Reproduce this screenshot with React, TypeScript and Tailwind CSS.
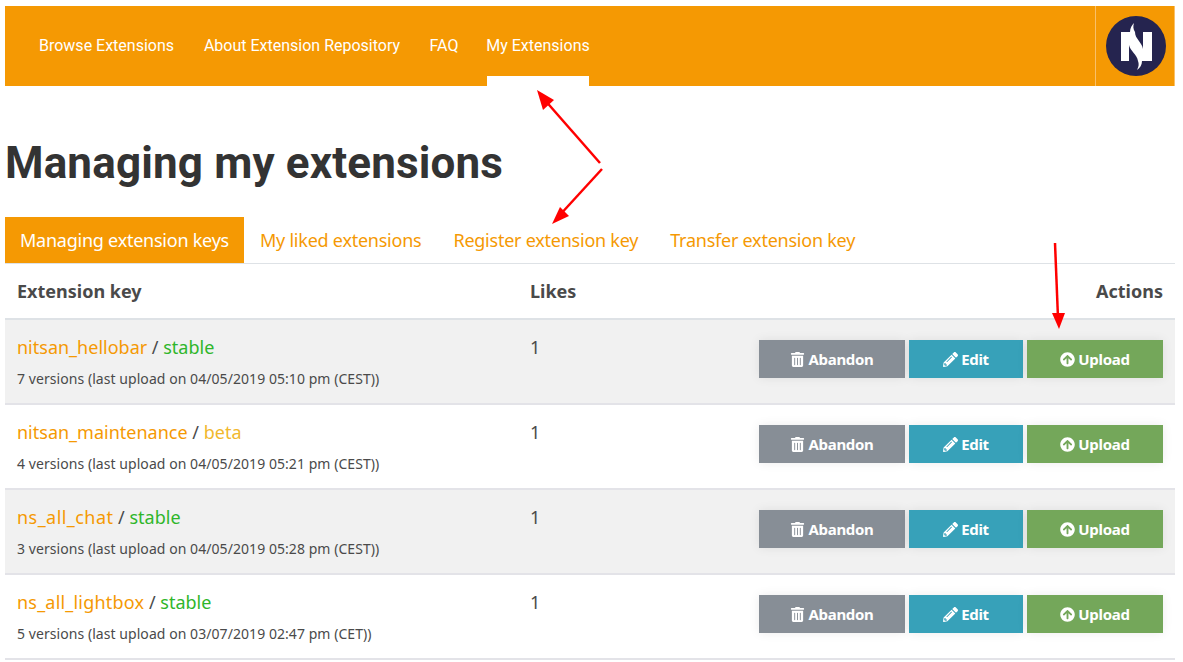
import React from "react";
import { FaTrashAlt, FaPencilAlt, FaArrowCircleUp } from "react-icons/fa";

const rows = [
  { key: "nitsan_hellobar", track: "", state: "stable", info: "7 versions (last upload on 04/05/2019 05:10 pm (CEST))" },
  { key: "nitsan_maintenance", track: "", state: "beta", info: "4 versions (last upload on 04/05/2019 05:21 pm (CEST))" },
  { key: "ns_all_chat", track: "tracking-[0.45px]", state: "stable", info: "3 versions (last upload on 04/05/2019 05:28 pm (CEST))" },
  { key: "ns_all_lightbox", track: "tracking-[0.2px]", state: "stable", info: "5 versions (last upload on 03/07/2019 02:47 pm (CET))" },
];

function Btn({ w, bg, icon, label }: { w: string; bg: string; icon: React.ReactNode; label: string }) {
  return (
    <div className={`${w} ${bg} h-[38px] flex items-center justify-center gap-[3px] text-white font-bold text-[15px] tracking-[-0.3px] shadow-[0_0_10px_rgba(0,0,0,0.08)]`}>
      {icon}
      <span>{label}</span>
    </div>
  );
}

export default function App() {
  return (
    <div className="relative w-[1183px] h-[662px] overflow-hidden bg-white font-['Noto_Sans',sans-serif] text-[#4a4a4a] pt-[6px] pl-[5px]">
      <nav className="w-[1170px] h-[80px] bg-[#f59903] flex justify-between text-white font-['Roboto',sans-serif] text-[16px]">
        <ul className="flex pl-[35px] gap-[30px] h-full">
          <li className="h-full w-[133px] flex items-center justify-center whitespace-nowrap">Browse Extensions</li>
          <li className="h-full w-[198px] flex items-center justify-center whitespace-nowrap">About Extension Repository</li>
          <li className="h-full w-[26px] flex items-center justify-center whitespace-nowrap">FAQ</li>
          <li className="h-full w-[102px] flex items-center justify-center whitespace-nowrap border-b-[10px] border-white pt-[10px]">My Extensions</li>
        </ul>
        <div className="w-[80px] h-full border-x border-[#f9c069] pl-[1px] flex items-center justify-center">
          <svg width="60" height="60" viewBox="0 0 60 60">
            <circle cx="30" cy="30" r="30" fill="#25244f" />
            <path d="M15 16H46V45H15Z" fill="#fff" />
            <path d="M29 16H37V33C36 26 29 23 29 16Z" fill="#25244f" />
            <path d="M23 29C24 35 31 38 32 45H23Z" fill="#25244f" />
            <path d="M24 16C24 12 26 9 28 7C27 10 27 13 29 16Z" fill="#fff" />
            <path d="M32 45H36C36 49 34 52 31 54C33 50 33 48 32 45Z" fill="#fff" />
          </svg>
        </div>
      </nav>

      <h1 className="font-['Roboto',sans-serif] font-bold text-[44px] leading-[52px] text-[#333] mt-[51px] tracking-[0.15px]">Managing my extensions</h1>

      <div className="w-[1170px] mt-[28px] h-[47px] flex border-b border-[#dee2e6] text-[18px] tracking-[-0.24px]">
        <div className="w-[239px] h-[46px] bg-[#f59903] text-white flex items-center justify-center">Managing extension keys</div>
        {["My liked extensions", "Register extension key", "Transfer extension key"].map((t) => (
          <div key={t} className="h-[46px] px-[16px] flex items-center text-[#f59903]">{t}</div>
        ))}
      </div>

      <div className="w-[1170px]">
        <div className="h-[56px] border-b-[2px] border-[#dee2e6] grid grid-cols-[513px_1fr_auto] items-center px-[12px] font-bold text-[18px]">
          <div>Extension key</div>
          <div>Likes</div>
          <div>Actions</div>
        </div>
        {rows.map((r, i) => (
          <div key={r.key} className={`h-[85px] border-b-[2px] border-[#e3e3e8] grid grid-cols-[513px_1fr_auto] px-[12px] pt-[14px] ${i === 1 || i === 3 ? "bg-white" : "bg-[#f1f1f1]"}`}>
            <div>
              <div className="text-[18px] leading-[26px]">
                <span className={`text-[#f59903] ${r.track}`}>{r.key}</span>
                <span> / </span>
                <span className={r.state === "stable" ? "text-[#2fb62a]" : "text-[#f1b82d]"}>{r.state}</span>
              </div>
              <div className="text-[14px] leading-[20px] mt-[9px] tracking-[0.06px]">{r.info}</div>
            </div>
            <div className="text-[18px] leading-[26px]">1</div>
            <div className="flex gap-[4px] pt-[6px]">
              <Btn w="w-[146px]" bg="bg-[#878e96]" label="Abandon" icon={<FaTrashAlt size={15} />} />
              <Btn w="w-[114px]" bg="bg-[#37a1b9]" label="Edit" icon={<FaPencilAlt size={15} />} />
              <Btn w="w-[136px]" bg="bg-[#74a75a]" label="Upload" icon={<FaArrowCircleUp size={15} />} />
            </div>
          </div>
        ))}
      </div>

      <svg className="absolute left-0 top-0 pointer-events-none" width="1183" height="662">
        <g stroke="#f00" strokeWidth="2.5" fill="#f00">
          <line x1="600" y1="163" x2="543" y2="98" />
          <line x1="602" y1="169" x2="558" y2="217" />
          <line x1="1055" y1="243" x2="1058" y2="318" />
        </g>
        <polygon points="537,90 554,100 543,110" fill="#f00" />
        <polygon points="552,224 560,207 569,216" fill="#f00" />
        <polygon points="1059,329 1052,313 1065,313" fill="#f00" />
      </svg>
    </div>
  );
}
